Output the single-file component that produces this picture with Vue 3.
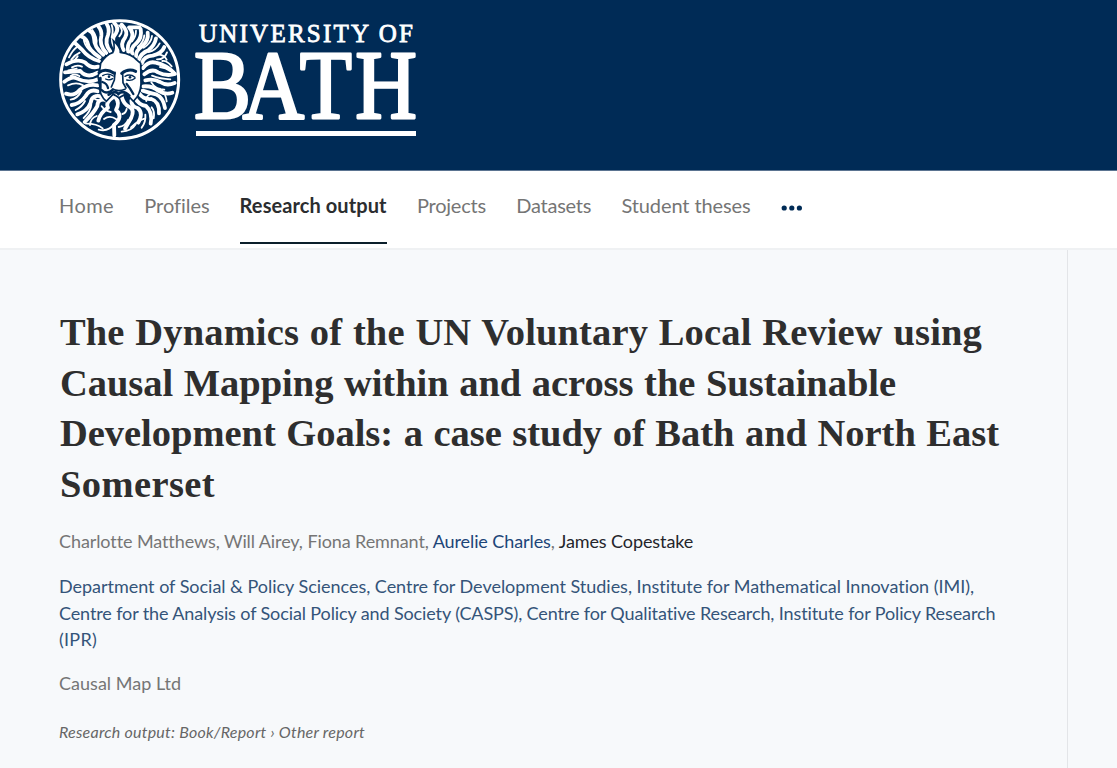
<template>
  <div class="page">
    <header class="header">
      <svg class="crest" viewBox="0 0 420 420" aria-hidden="true">
        <circle cx="209" cy="209" r="177" fill="#002b56" stroke="#fff" stroke-width="9" />
        <!-- hair and beard locks -->
        <g class="locks">
          <path v-for="(lock, i) in locks" :key="i" :d="lock" />
        </g>
        <g class="locks thin">
          <path v-for="(lock, i) in thinLocks" :key="i" :d="lock" />
        </g>
        <!-- face -->
        <path
          fill="#fff"
          stroke="#002b56"
          stroke-width="5"
          d="M152 160 Q168 134 188 128 Q196 116 190 92 Q212 112 211 127 Q246 132 260 150 L272 160 L273 222 Q271 255 250 274 L229 251 L207 263 L190 252 L169 274 Q148 255 150 232 L144 199 L149 183 Z"
        />
        <g class="features">
          <path d="M147 188 Q160 176 179 183 L193 190 M215 190 Q235 174 257 184" stroke-width="9" />
          <path d="M158 197 Q174 187 190 198 M167 207 Q178 213 188 206 M225 199 Q240 190 255 202 M230 210 Q244 214 255 205" stroke-width="4" />
          <path d="M195 187 L193 210 L184 231 M218 193 L219 218 L228 234 M187 237 Q205 246 225 238" stroke-width="5" />
          <path d="M157 216 Q171 220 174 234 M151 237 Q170 257 189 239 M230 222 Q241 235 250 252" stroke-width="7" />
          <path d="M176 254 Q196 240 205 252 Q220 239 238 257 M151 204 L151 233" stroke-width="8" />
          <circle cx="177" cy="200" r="4" />
          <circle cx="240" cy="202" r="4" />
        </g>
      </svg>
      <svg class="wordmark" viewBox="0 0 225 120" aria-label="University of Bath">
        <text class="small-word" x="4" y="27" textLength="214" lengthAdjust="spacing">UNIVERSITY OF</text>
        <text class="big-word" transform="translate(0 103) scale(.88 1)" x="-1 54 119 182">BATH</text>
        <rect x="1" y="116" width="220" height="5" fill="#fff" />
      </svg>
    </header>

    <nav class="nav">
      <a
        v-for="item in navItems"
        :key="item.label"
        href="#"
        :class="['nav-item', { active: item.active }]"
        :style="{ width: item.width + 'px' }"
      ><span v-fit="item.width">{{ item.label }}</span></a>
      <button class="more" aria-label="More">
        <svg width="22" height="8" viewBox="0 0 22 8">
          <circle cx="3.2" cy="4" r="2.6" />
          <circle cx="10.8" cy="4" r="2.6" />
          <circle cx="18.4" cy="4" r="2.6" />
        </svg>
      </button>
    </nav>

    <main class="content">
      <article class="details">
        <h1>
          <span v-for="line in titleLines" :key="line.text" v-fit="line.width" class="line">{{ line.text }}</span>
        </h1>

        <p class="authors">
          <span v-fit="633" class="line">Charlotte Matthews, Will Airey, Fiona Remnant, <a href="#">Aurelie Charles</a>, <a href="#" class="dark">James Copestake</a></span>
        </p>

        <p class="units">
          <span v-for="line in unitLines" :key="line.text" v-fit="line.width" class="line">{{ line.text }}</span>
        </p>

        <p class="company"><span v-fit="122" class="line">Causal Map Ltd</span></p>

        <p class="kind"><span v-fit="306" class="line">Research output: Book/Report › Other report</span></p>
      </article>
    </main>
  </div>
</template>

<script setup>
const navItems = [
  { label: 'Home', width: 55 },
  { label: 'Profiles', width: 65 },
  { label: 'Research output', width: 147, active: true },
  { label: 'Projects', width: 69 },
  { label: 'Datasets', width: 75 },
  { label: 'Student theses', width: 129 }
]

const titleLines = [
  { text: 'The Dynamics of the UN Voluntary Local Review using', width: 922 },
  { text: 'Causal Mapping within and across the Sustainable', width: 836 },
  { text: 'Development Goals: a case study of Bath and North East', width: 939 },
  { text: 'Somerset', width: 155 }
]

const unitLines = [
  { text: 'Department of Social & Policy Sciences, Centre for Development Studies, Institute for Mathematical Innovation (IMI),', width: 916 },
  { text: 'Centre for the Analysis of Social Policy and Society (CASPS), Centre for Qualitative Research, Institute for Policy Research', width: 937 },
  { text: '(IPR)', width: 38 }
]

const locks = [
  'M149 142 Q116 121 112 97 Q106 82 94 80',
  'M160 134 Q132 112 132 85 Q130 68 119 63',
  'M169 129 Q146 105 154 78 Q156 61 145 49',
  'M181 124 Q162 100 174 75 Q180 57 170 42',
  'M201 120 Q179 91 198 70 Q208 53 192 38',
  'M221 120 Q210 101 225 83 Q237 65 215 44',
  'M235 126 Q229 107 243 90 Q254 71 237 52 L268 52',
  'M247 132 Q240 115 259 100 Q277 83 272 57',
  'M258 140 Q256 122 276 109 Q297 92 293 68',
  'M267 149 Q273 129 295 121 Q315 105 318 85',
  'M276 159 Q282 139 308 137 Q336 130 343 111',
  'M279 174 Q296 152 317 158 Q349 165 371 188',
  'M283 193 Q306 174 324 187 Q349 200 375 192',
  'M286 211 Q311 205 330 216 Q350 229 374 219',
  'M280 229 Q308 227 324 242 Q347 256 367 248',
  'M147 153 Q116 145 96 119 L76 100',
  'M145 170 Q124 177 105 157 Q82 144 49 163',
  'M143 188 Q112 207 91 183 L45 187',
  'M144 208 Q113 222 80 205 Q66 198 43 215',
  'M143 226 Q112 220 89 240 Q72 260 48 251',
  'M143 244 Q120 235 107 258 Q91 281 65 285',
  'M157 260 Q126 251 122 278 Q112 304 82 313',
  'M171 271 Q143 263 142 288 Q131 309 104 336',
  'M189 262 Q165 277 174 293 Q150 309 145 332',
  'M197 263 Q210 278 198 300 Q222 320 192 345 L193 376',
  'M215 259 Q220 283 239 291 Q255 300 243 325 L225 356',
  'M244 272 Q244 289 263 294 Q281 309 265 338',
  'M254 262 Q265 284 288 288 Q309 307 302 341',
  'M268 251 Q281 269 304 267 Q329 275 327 310',
  'M278 242 Q302 250 318 253 Q340 263 345 294'
]

const thinLocks = [
  'M57 142 Q68 120 81 111 M64 149 Q75 134 89 128 M71 154 L83 139',
  'M101 87 Q103 107 119 121 M127 60 Q143 81 139 103 M185 45 Q191 61 185 82',
  'M207 46 Q224 61 208 79 M258 62 Q258 79 246 94 M283 76 Q281 97 263 111',
  'M306 78 Q304 99 281 113 M329 100 Q318 121 296 126 M351 127 Q343 149 321 148',
  'M324 134 Q342 134 350 149 M330 171 Q348 173 359 182 M365 169 Q350 151 337 153',
  'M66 172 Q82 163 96 170 M55 181 L80 176 M62 198 Q74 190 88 198',
  'M54 226 Q80 214 99 226 M62 269 Q83 266 94 243 M77 300 Q97 290 105 273',
  'M101 324 Q122 304 124 284 M120 345 Q121 325 140 318 M146 359 Q176 366 191 343',
  'M155 289 Q165 303 182 306 M162 327 Q180 314 199 328 M206 351 Q226 349 234 330',
  'M215 365 Q245 363 257 343 M217 312 Q228 309 230 297 M275 353 Q288 337 286 314',
  'M305 292 Q315 304 311 325 M350 274 Q348 251 330 236 M304 217 Q316 238 343 239',
  'M306 197 Q331 207 361 208 M303 252 Q286 258 289 273 M130 264 Q149 278 158 263',
  'M108 341 Q141 341 158 355 M243 352 Q266 330 284 326'
]

const vFit = {
  mounted(el, { value }) {
    const natural = el.getBoundingClientRect().width
    const gaps = el.textContent.length
    el.style.letterSpacing = `${(value - natural) / gaps}px`
  }
}
</script>

<style>
body {
  background-color: #f7f9fb;
}
</style>

<style scoped>
.page {
  height: 768px;
  display: flex;
  flex-direction: column;
  overflow: hidden;
  background-color: #f7f9fb;
  font-family: Lato, 'Open Sans', sans-serif;
  color: #757575;
}

.header {
  display: flex;
  flex: none;
  height: 160px;
  padding: 10px 0 0 50px;
  background-color: #002b56;
  border-bottom: 1px solid #5b7491;
}

.crest {
  width: 140px;
  height: 140px;
}

.locks {
  fill: none;
  stroke: #fff;
  stroke-width: 11.5;
  stroke-linecap: round;
  stroke-linejoin: round;
}

.thin {
  stroke-width: 5.5;
}

.features {
  fill: none;
  stroke: #002b56;
  stroke-linecap: round;
}

.features circle {
  fill: #002b56;
  stroke: none;
}

.wordmark {
  width: 225px;
  height: 120px;
  margin: 5px 0 0 5px;
  overflow: visible;
}

.small-word,
.big-word {
  font-family: 'Liberation Serif', serif;
  fill: #fff;
  stroke: #fff;
}

.small-word {
  font-size: 25px;
  stroke-width: 0.8px;
}

.big-word {
  font-size: 97px;
  stroke-width: 2.8px;
  stroke-linejoin: round;
}

.nav {
  display: flex;
  flex: none;
  gap: 30.3px;
  height: 77px;
  padding-left: 59px;
  background-color: #fff;
  border-bottom: 2px solid #eff1f3;
}

.nav-item {
  box-sizing: border-box;
  height: 73px;
  padding-top: 22px;
  font-size: 20px;
  line-height: 24px;
  color: #757575;
  text-decoration: none;
  white-space: nowrap;
}

.nav-item.active {
  font-weight: bold;
  color: #2b2d2f;
  border-bottom: 2px solid #0b1f2b;
}

.more {
  display: flex;
  align-items: flex-start;
  padding: 33px 0 0;
  border: none;
  background: none;
  fill: #002b56;
  cursor: pointer;
}

.content {
  display: flex;
  flex: 1;
}

.details {
  box-sizing: border-box;
  width: 1068px;
  padding: 57px 0 0 59px;
  border-right: 1px solid #e3e5e8;
}

.line {
  display: block;
  width: max-content;
  white-space: nowrap;
}

h1 {
  margin: 0 0 0 1px;
  font-family: 'Liberation Serif', serif;
  font-size: 38.5px;
  font-weight: bold;
  line-height: 50.5px;
  word-spacing: 1px;
  color: #2e2e2e;
}

p {
  margin: 0;
  font-size: 18px;
  line-height: 26.3px;
}

.authors {
  margin-top: 19px;
}

.authors a {
  color: #1d4578;
  text-decoration: none;
}

.authors .dark {
  color: #24252b;
}

.units {
  margin-top: 19px;
  color: #345479;
}

.company {
  margin-top: 18px;
}

.kind {
  margin-top: 23px;
  font-size: 16px;
  font-style: italic;
  color: #666;
}
</style>
